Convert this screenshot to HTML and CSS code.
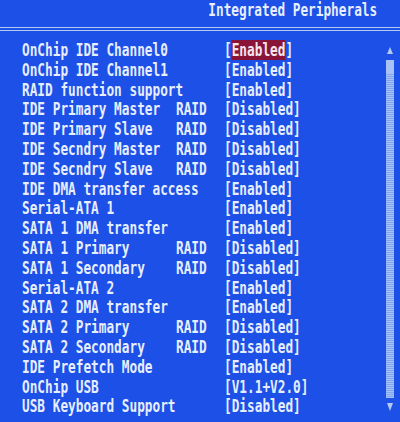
FILE: index.html
```html
<!DOCTYPE html>
<html>
<head>
<meta charset="utf-8">
<link rel="stylesheet" href="styles.css">
</head>
<body>
<div class="screen">
  <div class="header"><span class="t title">Integrated Peripherals</span></div>
  <div class="rule"></div>
  <div class="main">
    <div class="list">
      <div class="row"><span class="t">OnChip IDE Channel0</span><span></span><span class="t">[<span class="sel">Enabled</span>]</span></div>
      <div class="row"><span class="t">OnChip IDE Channel1</span><span></span><span class="t">[Enabled]</span></div>
      <div class="row"><span class="t">RAID function support</span><span></span><span class="t">[Enabled]</span></div>
      <div class="row"><span class="t">IDE Primary Master</span><span class="t">RAID</span><span class="t">[Disabled]</span></div>
      <div class="row"><span class="t">IDE Primary Slave</span><span class="t">RAID</span><span class="t">[Disabled]</span></div>
      <div class="row"><span class="t">IDE Secndry Master</span><span class="t">RAID</span><span class="t">[Disabled]</span></div>
      <div class="row"><span class="t">IDE Secndry Slave</span><span class="t">RAID</span><span class="t">[Disabled]</span></div>
      <div class="row"><span class="t">IDE DMA transfer access</span><span></span><span class="t">[Enabled]</span></div>
      <div class="row"><span class="t">Serial-ATA 1</span><span></span><span class="t">[Enabled]</span></div>
      <div class="row"><span class="t">SATA 1 DMA transfer</span><span></span><span class="t">[Enabled]</span></div>
      <div class="row"><span class="t">SATA 1 Primary</span><span class="t">RAID</span><span class="t">[Disabled]</span></div>
      <div class="row"><span class="t">SATA 1 Secondary</span><span class="t">RAID</span><span class="t">[Disabled]</span></div>
      <div class="row"><span class="t">Serial-ATA 2</span><span></span><span class="t">[Enabled]</span></div>
      <div class="row"><span class="t">SATA 2 DMA transfer</span><span></span><span class="t">[Enabled]</span></div>
      <div class="row"><span class="t">SATA 2 Primary</span><span class="t">RAID</span><span class="t">[Disabled]</span></div>
      <div class="row"><span class="t">SATA 2 Secondary</span><span class="t">RAID</span><span class="t">[Disabled]</span></div>
      <div class="row"><span class="t">IDE Prefetch Mode</span><span></span><span class="t">[Enabled]</span></div>
      <div class="row"><span class="t">OnChip USB</span><span></span><span class="t">[V1.1+V2.0]</span></div>
      <div class="row"><span class="t">USB Keyboard Support</span><span></span><span class="t">[Disabled]</span></div>
    </div>
    <div class="scroll">
      <svg class="arrow" width="6" height="7" viewBox="0 0 6 7"><polygon points="3,0 6,7 0,7" fill="#b4c8f4"/></svg>
      <div class="track"><div class="thumb"></div></div>
      <svg class="arrow down" width="6" height="8" viewBox="0 0 6 8"><polygon points="0,0 6,0 3,8" fill="#b4c8f4"/></svg>
    </div>
  </div>
</div>
</body>
</html>
```

FILE: styles.css
```css
html, body {
  margin: 0;
  padding: 0;
}
body {
  width: 400px;
  height: 422px;
  overflow: hidden;
  background: #1c50e6;
  color: #e6eeff;
  font-family: "DejaVu Sans Mono", "Liberation Mono", monospace;
  font-size: 17px;
  font-weight: bold;
}
.screen {
  display: flex;
  flex-direction: column;
  height: 422px;
}
.t {
  display: inline-block;
  white-space: pre;
  transform: scaleX(0.75);
  transform-origin: 0 50%;
}
.header {
  height: 27px;
  line-height: 20px;
  display: flex;
  justify-content: flex-end;
  padding-right: 23px;
}
.title {
  transform-origin: 100% 50%;
}
.rule {
  height: 2px;
  border-top: 1px solid #b4c8f4;
  border-bottom: 1px solid #b4c8f4;
}
.main {
  flex: 1;
  display: flex;
  padding-top: 10px;
}
.list {
  flex: 1;
  padding-left: 22px;
}
.row {
  display: grid;
  grid-template-columns: 154px 48px 1fr;
  height: 19.8px;
  line-height: 19.8px;
}
.sel {
  background: #8a1438;
  color: #f4e6ee;
}
.scroll {
  width: 8px;
  margin-right: 6px;
  margin-top: 6px;
  margin-bottom: 11px;
  display: flex;
  flex-direction: column;
  align-items: center;
}
.arrow {
  display: block;
  flex: none;
}
.track {
  flex: 1;
  width: 8px;
  margin: 6px 0 5px;
  background-color: #80a6f0;
  background-image: repeating-linear-gradient(0deg, rgba(180,204,248,0.7) 0 1px, transparent 1px 2px);
}
.thumb {
  height: 14px;
  background: #a8c2f4;
}
```
